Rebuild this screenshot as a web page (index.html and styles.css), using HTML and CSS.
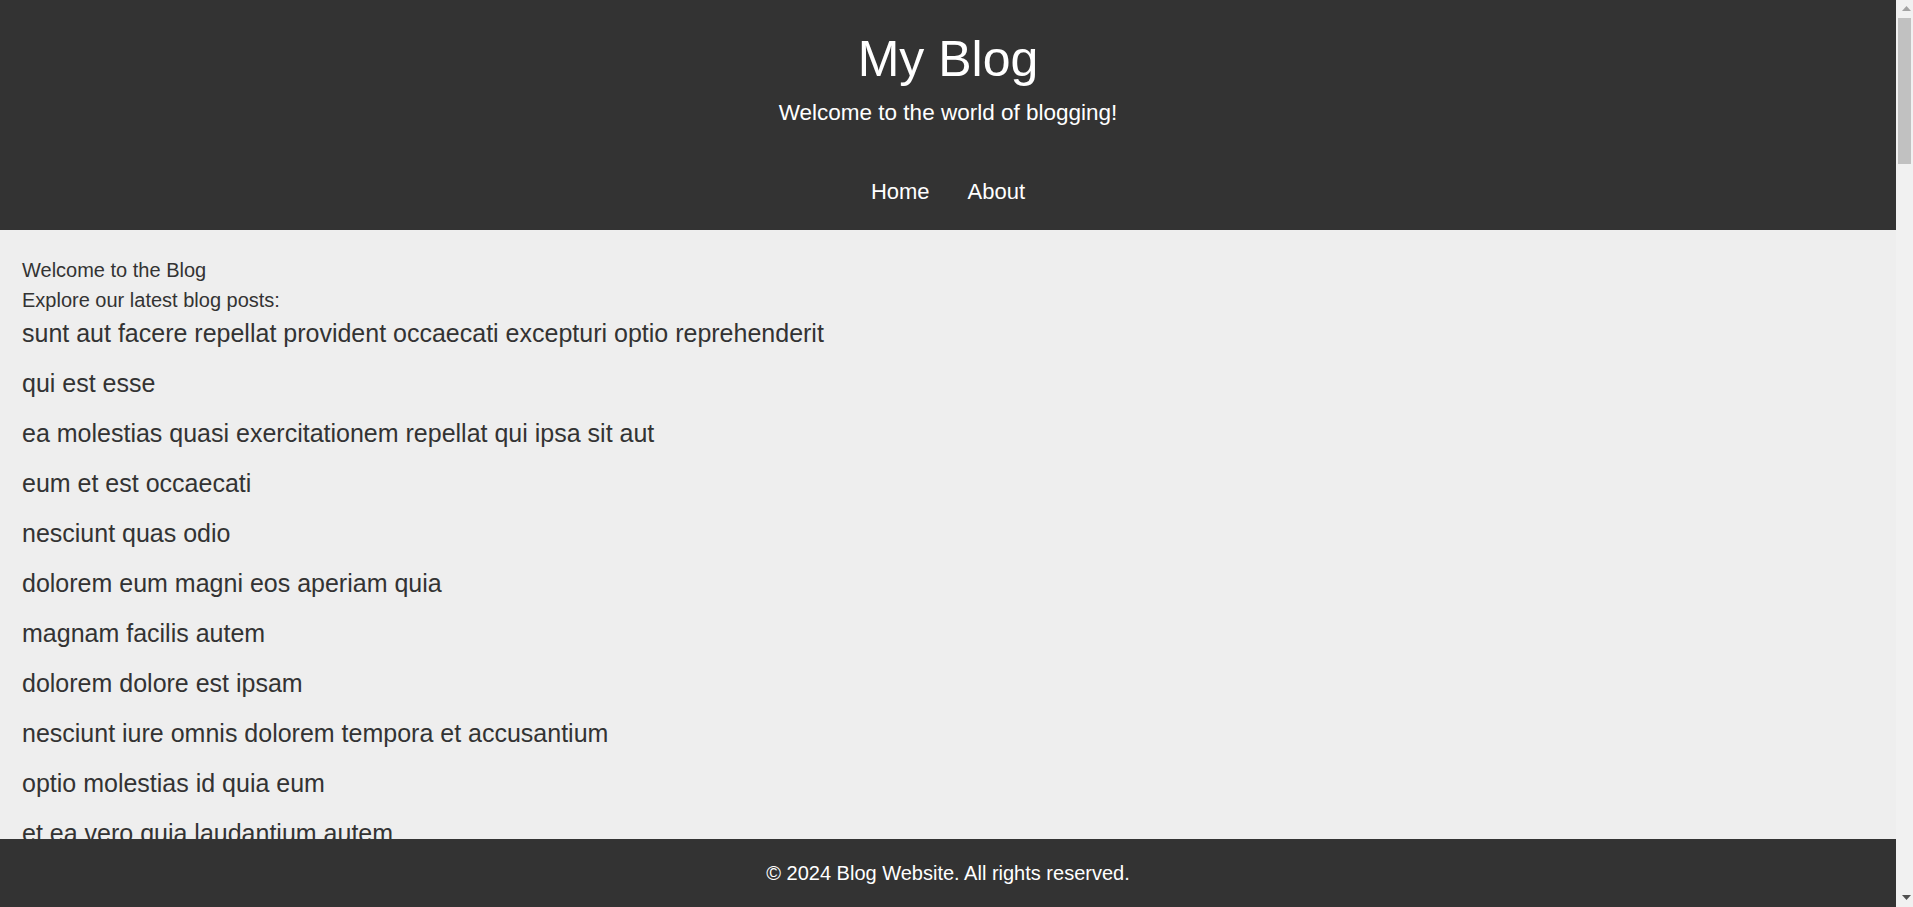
FILE: index.html
```html
<!DOCTYPE html>
<html lang="en">
<head>
<meta charset="utf-8">
<title>My Blog</title>
<link rel="stylesheet" href="styles.css">
</head>
<body>
<div class="page">
<header class="site-header">
  <h1 class="site-title">My Blog</h1>
  <p class="site-tagline">Welcome to the world of blogging!</p>
  <nav class="site-nav">
    <a class="nav-link" href="#">Home</a>
    <a class="nav-link" href="#">About</a>
  </nav>
</header>
<main class="content">
  <h2 class="intro-title">Welcome to the Blog</h2>
  <p class="intro-text">Explore our latest blog posts:</p>
  <ul class="post-list">
    <li class="post-item"><a class="post-link" href="#">sunt aut facere repellat provident occaecati excepturi optio reprehenderit</a></li>
    <li class="post-item"><a class="post-link" href="#">qui est esse</a></li>
    <li class="post-item"><a class="post-link" href="#">ea molestias quasi exercitationem repellat qui ipsa sit aut</a></li>
    <li class="post-item"><a class="post-link" href="#">eum et est occaecati</a></li>
    <li class="post-item"><a class="post-link" href="#">nesciunt quas odio</a></li>
    <li class="post-item"><a class="post-link" href="#">dolorem eum magni eos aperiam quia</a></li>
    <li class="post-item"><a class="post-link" href="#">magnam facilis autem</a></li>
    <li class="post-item"><a class="post-link" href="#">dolorem dolore est ipsam</a></li>
    <li class="post-item"><a class="post-link" href="#">nesciunt iure omnis dolorem tempora et accusantium</a></li>
    <li class="post-item"><a class="post-link" href="#">optio molestias id quia eum</a></li>
    <li class="post-item"><a class="post-link" href="#">et ea vero quia laudantium autem</a></li>
    <li class="post-item"><a class="post-link" href="#">in quibusdam tempore odit est dolorem</a></li>
    <li class="post-item"><a class="post-link" href="#">dolorum ut in voluptas mollitia et saepe quo animi</a></li>
    <li class="post-item"><a class="post-link" href="#">voluptatem eligendi optio</a></li>
    <li class="post-item"><a class="post-link" href="#">eveniet quod temporibus</a></li>
    <li class="post-item"><a class="post-link" href="#">sint suscipit perspiciatis velit dolorum rerum ipsa laboriosam odio</a></li>
    <li class="post-item"><a class="post-link" href="#">fugit voluptas sed molestias voluptatem provident</a></li>
    <li class="post-item"><a class="post-link" href="#">voluptate et itaque vero tempora molestiae</a></li>
    <li class="post-item"><a class="post-link" href="#">adipisci placeat illum aut reiciendis qui</a></li>
    <li class="post-item"><a class="post-link" href="#">doloribus ad provident suscipit at</a></li>
    <li class="post-item"><a class="post-link" href="#">asperiores ea ipsam voluptatibus modi minima quia sint</a></li>
    <li class="post-item"><a class="post-link" href="#">dolor sint quo a velit explicabo quia nam</a></li>
    <li class="post-item"><a class="post-link" href="#">maxime id vitae nihil numquam</a></li>
    <li class="post-item"><a class="post-link" href="#">autem hic labore sunt dolores incidunt</a></li>
    <li class="post-item"><a class="post-link" href="#">rem alias distinctio quo quis</a></li>
    <li class="post-item"><a class="post-link" href="#">est et quae odit qui non</a></li>
    <li class="post-item"><a class="post-link" href="#">quasi id et eos tenetur aut quo autem</a></li>
    <li class="post-item"><a class="post-link" href="#">delectus ullam et corporis nulla voluptas sequi</a></li>
    <li class="post-item"><a class="post-link" href="#">iusto eius quod necessitatibus culpa ea</a></li>
    <li class="post-item"><a class="post-link" href="#">a quo magni similique perferendis</a></li>
    <li class="post-item"><a class="post-link" href="#">ullam ut quidem id aut vel consequuntur</a></li>
    <li class="post-item"><a class="post-link" href="#">doloremque illum aliquid sunt</a></li>
    <li class="post-item"><a class="post-link" href="#">qui explicabo molestiae dolorem</a></li>
    <li class="post-item"><a class="post-link" href="#">magnam ut rerum iure</a></li>
    <li class="post-item"><a class="post-link" href="#">id nihil consequatur molestias animi provident</a></li>
    <li class="post-item"><a class="post-link" href="#">fuga nam accusamus voluptas reiciendis itaque</a></li>
    <li class="post-item"><a class="post-link" href="#">provident vel ut sit ratione est</a></li>
    <li class="post-item"><a class="post-link" href="#">explicabo et eos deleniti nostrum ab id repellendus</a></li>
    <li class="post-item"><a class="post-link" href="#">eos dolorem iste accusantium est eaque quam</a></li>
    <li class="post-item"><a class="post-link" href="#">enim quo cumque</a></li>
    <li class="post-item"><a class="post-link" href="#">non est facere</a></li>
    <li class="post-item"><a class="post-link" href="#">commodi ullam sint et excepturi error explicabo praesentium voluptas</a></li>
    <li class="post-item"><a class="post-link" href="#">eligendi iste nostrum consequuntur adipisci praesentium sit beatae perferendis</a></li>
    <li class="post-item"><a class="post-link" href="#">optio dolor molestias sit</a></li>
    <li class="post-item"><a class="post-link" href="#">ut numquam possimus omnis eius suscipit laudantium iure</a></li>
    <li class="post-item"><a class="post-link" href="#">aut quo modi neque nostrum ducimus</a></li>
    <li class="post-item"><a class="post-link" href="#">quibusdam cumque rem aut deserunt</a></li>
    <li class="post-item"><a class="post-link" href="#">ut voluptatem illum ea doloribus itaque eos</a></li>
    <li class="post-item"><a class="post-link" href="#">laborum non sunt aut ut assumenda perspiciatis voluptas</a></li>
    <li class="post-item"><a class="post-link" href="#">repellendus qui recusandae incidunt voluptates tenetur qui omnis exercitationem</a></li>
    <li class="post-item"><a class="post-link" href="#">soluta aliquam aperiam consequatur illo quis voluptas</a></li>
    <li class="post-item"><a class="post-link" href="#">qui enim et consequuntur quia animi quis voluptate quibusdam</a></li>
    <li class="post-item"><a class="post-link" href="#">ut quo aut ducimus alias</a></li>
    <li class="post-item"><a class="post-link" href="#">sit asperiores ipsam eveniet odio non quia</a></li>
    <li class="post-item"><a class="post-link" href="#">sit vel voluptatem et non libero</a></li>
    <li class="post-item"><a class="post-link" href="#">qui et at rerum necessitatibus</a></li>
    <li class="post-item"><a class="post-link" href="#">sed ab est est</a></li>
    <li class="post-item"><a class="post-link" href="#">voluptatum itaque dolores nisi et quasi</a></li>
    <li class="post-item"><a class="post-link" href="#">qui commodi dolor at maiores et quis id accusantium</a></li>
    <li class="post-item"><a class="post-link" href="#">consequatur placeat omnis quisquam quia reprehenderit fugit veritatis facere</a></li>
    <li class="post-item"><a class="post-link" href="#">voluptatem doloribus consectetur est ut ducimus</a></li>
    <li class="post-item"><a class="post-link" href="#">beatae enim quia vel</a></li>
    <li class="post-item"><a class="post-link" href="#">voluptas blanditiis repellendus animi ducimus error sapiente et suscipit</a></li>
    <li class="post-item"><a class="post-link" href="#">et fugit quas eum in in aperiam quod</a></li>
    <li class="post-item"><a class="post-link" href="#">consequatur id enim sunt et et</a></li>
    <li class="post-item"><a class="post-link" href="#">repudiandae ea animi iusto</a></li>
    <li class="post-item"><a class="post-link" href="#">aliquid eos sed fuga est maxime repellendus</a></li>
    <li class="post-item"><a class="post-link" href="#">odio quis facere architecto reiciendis optio</a></li>
    <li class="post-item"><a class="post-link" href="#">fugiat quod pariatur odit minima</a></li>
    <li class="post-item"><a class="post-link" href="#">voluptatem laborum magni</a></li>
    <li class="post-item"><a class="post-link" href="#">et iusto veniam et illum aut fuga</a></li>
    <li class="post-item"><a class="post-link" href="#">sint hic doloribus consequatur eos non id</a></li>
    <li class="post-item"><a class="post-link" href="#">consequuntur deleniti eos quia temporibus ab aliquid at</a></li>
    <li class="post-item"><a class="post-link" href="#">enim unde ratione doloribus quas enim ut sit sapiente</a></li>
    <li class="post-item"><a class="post-link" href="#">dignissimos eum dolor ut enim et delectus in</a></li>
    <li class="post-item"><a class="post-link" href="#">doloremque officiis ad et non perferendis</a></li>
    <li class="post-item"><a class="post-link" href="#">necessitatibus quasi exercitationem odio</a></li>
    <li class="post-item"><a class="post-link" href="#">quam voluptatibus rerum veritatis</a></li>
    <li class="post-item"><a class="post-link" href="#">pariatur consequatur quia magnam autem omnis non amet</a></li>
    <li class="post-item"><a class="post-link" href="#">labore in ex et explicabo corporis aut quas</a></li>
    <li class="post-item"><a class="post-link" href="#">tempora rem veritatis voluptas quo dolores vero</a></li>
    <li class="post-item"><a class="post-link" href="#">laudantium voluptate suscipit sunt enim enim</a></li>
    <li class="post-item"><a class="post-link" href="#">odit et voluptates doloribus alias odio et</a></li>
    <li class="post-item"><a class="post-link" href="#">optio ipsam molestias necessitatibus occaecati facilis veritatis dolores aut</a></li>
    <li class="post-item"><a class="post-link" href="#">dolore veritatis porro provident adipisci blanditiis et sunt</a></li>
    <li class="post-item"><a class="post-link" href="#">placeat quia et porro iste</a></li>
    <li class="post-item"><a class="post-link" href="#">nostrum quis quasi placeat</a></li>
    <li class="post-item"><a class="post-link" href="#">sapiente omnis fugit eos</a></li>
    <li class="post-item"><a class="post-link" href="#">sint soluta et vel magnam aut ut sed qui</a></li>
    <li class="post-item"><a class="post-link" href="#">ad iusto omnis odit dolor voluptatibus</a></li>
    <li class="post-item"><a class="post-link" href="#">aut amet sed</a></li>
    <li class="post-item"><a class="post-link" href="#">ratione ex tenetur perferendis</a></li>
    <li class="post-item"><a class="post-link" href="#">beatae soluta recusandae</a></li>
    <li class="post-item"><a class="post-link" href="#">qui qui voluptates illo iste minima</a></li>
    <li class="post-item"><a class="post-link" href="#">id minus libero illum nam ad officiis</a></li>
    <li class="post-item"><a class="post-link" href="#">quaerat velit veniam amet cupiditate aut numquam ut sequi</a></li>
    <li class="post-item"><a class="post-link" href="#">quas fugiat ut perspiciatis vero provident</a></li>
    <li class="post-item"><a class="post-link" href="#">laboriosam dolor voluptates</a></li>
    <li class="post-item"><a class="post-link" href="#">temporibus sit alias delectus eligendi possimus magni</a></li>
    <li class="post-item"><a class="post-link" href="#">at nam consequatur ea labore ea harum</a></li>
  </ul>
</main>
<footer class="site-footer">
  <p class="footer-text">© 2024 Blog Website. All rights reserved.</p>
</footer>
</div>
<div class="scrollbar" aria-hidden="true">
  <div class="scroll-btn">
    <svg class="scroll-arrow" width="9" height="5" viewBox="0 0 9 5"><polygon points="4.5,0 9,5 0,5" fill="#a3a3a3"/></svg>
  </div>
  <div class="scroll-track">
    <div class="scroll-thumb"></div>
  </div>
  <div class="scroll-btn scroll-btn-down">
    <svg class="scroll-arrow" width="9" height="5" viewBox="0 0 9 5"><polygon points="0,0 9,0 4.5,5" fill="#505050"/></svg>
  </div>
</div>
</body>
</html>
```

FILE: styles.css
```css
html {
  height: 100%;
  overflow: hidden;
  background: #eeeeee;
}

body {
  margin: 0;
  height: 100%;
  overflow: hidden;
  display: flex;
  font-family: "Liberation Sans", Arial, sans-serif;
  color: #333333;
  background: #eeeeee;
}

.page {
  flex: 1;
  min-width: 0;
  height: 100%;
  overflow-y: auto;
  display: flex;
  flex-direction: column;
}

.scrollbar {
  width: 17px;
  flex: none;
  height: 100%;
  background: #f1f1f1;
  display: flex;
  flex-direction: column;
}

.scroll-btn {
  height: 17px;
  flex: none;
  display: flex;
  padding: 6px 0 0 6px;
  box-sizing: border-box;
}

.scroll-btn-down {
  padding-top: 5px;
}

.scroll-arrow {
  display: block;
}

.scroll-track {
  flex: 1;
  padding: 1px 2px 0;
}

.scroll-thumb {
  height: 146px;
  background: #c1c1c1;
}

.site-header {
  flex: none;
  background: #333333;
  color: #ffffff;
  text-align: center;
  padding: 31px 0 25px;
  display: flex;
  flex-direction: column;
  align-items: center;
}

.site-title {
  margin: 0;
  font-size: 50px;
  font-weight: normal;
  line-height: 56px;
}

.site-tagline {
  margin: 13px 0 0;
  font-size: 22.5px;
  line-height: 26px;
}

.site-nav {
  margin-top: 53px;
  display: flex;
  gap: 38px;
  justify-content: center;
}

.nav-link {
  color: #ffffff;
  text-decoration: none;
  font-size: 22px;
  line-height: 26px;
}

.content {
  flex: none;
  padding: 25px 22px 119px;
}

.intro-title {
  margin: 0;
  font-size: 20px;
  font-weight: normal;
  line-height: 30px;
}

.intro-text {
  margin: 0;
  font-size: 20px;
  line-height: 30px;
}

.post-list {
  list-style: none;
  margin: 0;
  padding: 0;
}

.post-item {
  font-size: 25px;
  line-height: 37.5px;
  margin-bottom: 12.5px;
}

.post-link {
  color: #333333;
  text-decoration: none;
}

.site-footer {
  position: fixed;
  left: 0;
  right: 17px;
  bottom: 0;
  background: #333333;
  color: #ffffff;
  text-align: center;
  padding: 22px 0;
}

.footer-text {
  margin: 0;
  font-size: 20px;
  line-height: 24px;
}
```
